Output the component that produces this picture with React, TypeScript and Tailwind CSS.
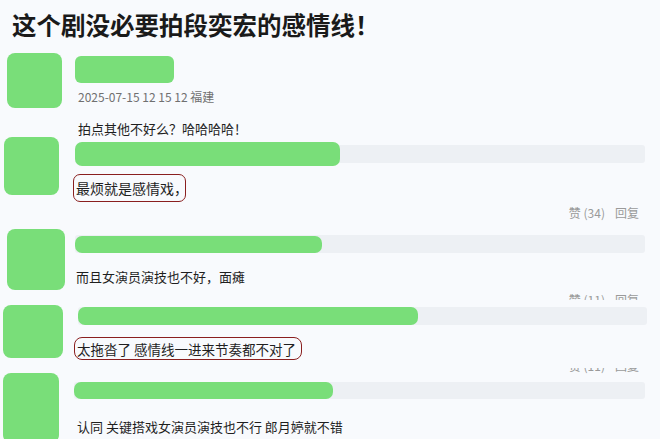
const font = "font-['Noto_Sans_CJK_SC','Noto_Sans',sans-serif]";

function Bar({ green, h, gh }: { green: number; h: number; gh: number }) {
  return (
    <div className="flex items-center bg-[#edf0f4] rounded-[3px]" style={{ height: gh }}>
      <div className="shrink-0 rounded-[7px] bg-[#79de79]" style={{ width: green, height: h }} />
    </div>
  );
}

function Likes({ n }: { n: number }) {
  return (
    <div className="flex justify-end gap-[10px] pr-[6px] text-[12px] leading-[16px] text-[#9a9a9a]">
      <span>赞 ({n})</span>
      <span>回复</span>
    </div>
  );
}

export default function App() {
  return (
    <div className={`w-[660px] h-[439px] overflow-hidden bg-[#f8fafd] text-[#1f1f1f] ${font}`}>
      {/* title */}
      <div className="h-[48px] pl-[12px] pt-[9px]">
        <h1 className="text-[24.5px] font-bold leading-[32px] text-[#1a1a1a]">这个剧没必要拍段奕宏的感情线！</h1>
      </div>

      {/* comment 1 */}
      <div className="h-[89px] flex pl-[7px] pt-[5px]">
        <div className="w-[55px] h-[55px] shrink-0 rounded-[8px] bg-[#79de79]" />
        <div className="ml-[13px] pt-[3px]">
          <div className="w-[99px] h-[27px] rounded-[6px] bg-[#79de79]" />
          <p className="mt-[6px] ml-[3px] text-[12px] leading-[16px] text-[#707070]">2025-07-15 12 15 12 福建</p>
          <p className="mt-[14px] ml-[3px] text-[13px] leading-[20px]">拍点其他不好么？哈哈哈哈！</p>
        </div>
      </div>

      {/* comment 2 */}
      <div className="h-[92px] flex pl-[4px]">
        <div className="w-[55px] h-[58px] shrink-0 rounded-[8px] bg-[#79de79]" />
        <div className="ml-[16px] w-[570px] pt-[8px]">
          <Bar green={265} h={24} gh={18} />
          <div className="mt-[11px] -ml-[2px] w-[113px] h-[28px] flex items-center pl-[2px] border-[1.5px] border-[#8a1f1f] rounded-[7px] text-[14px] leading-[20px] whitespace-nowrap">
            最烦就是感情戏，
          </div>
          <div className="mt-[3px]">
            <Likes n={34} />
          </div>
        </div>
      </div>

      {/* comment 3 */}
      <div className="h-[71px] overflow-hidden flex pl-[7px]">
        <div className="w-[58px] h-[61px] shrink-0 rounded-[8px] bg-[#79de79]" />
        <div className="ml-[10px] w-[570px] pt-[6px]">
          <Bar green={247} h={17} gh={18} />
          <p className="mt-[15px] ml-[1px] text-[13px] leading-[18px]">而且女演员演技也不好，面瘫</p>
          <div className="mt-[6px]">
            <Likes n={11} />
          </div>
        </div>
      </div>

      {/* comment 4 */}
      <div className="h-[68px] overflow-hidden flex pl-[3px] pt-[5px]">
        <div className="w-[60px] h-[53px] shrink-0 rounded-[8px] bg-[#79de79]" />
        <div className="ml-[15px] w-[569px] pt-[2px]">
          <Bar green={340} h={18} gh={18} />
          <div className="mt-[12px] -ml-[4px] w-[228px] h-[23px] pl-[2px] pt-[1px] border-[1.5px] border-[#8a1f1f] rounded-[8px] text-[13.5px] leading-[20px] whitespace-nowrap">
            太拖沓了 感情线一进来节奏都不对了
          </div>
        </div>
      </div>

      {/* comment 5 */}
      <div className="flex pl-[3px]">
        <div className="mt-[5px] w-[56px] h-[70px] shrink-0 rounded-[8px] bg-[#79de79]" />
        <div className="ml-[15px] w-[571px]">
          <div className="h-[7px] overflow-hidden">
            <div className="-mt-[10px]">
              <Likes n={11} />
            </div>
          </div>
          <div className="mt-[7px]">
            <Bar green={259} h={17} gh={17} />
          </div>
          <p className="mt-[19px] ml-[3px] text-[13px] leading-[18px]">认同 关键搭戏女演员演技也不行 郎月婷就不错</p>
        </div>
      </div>
    </div>
  );
}
